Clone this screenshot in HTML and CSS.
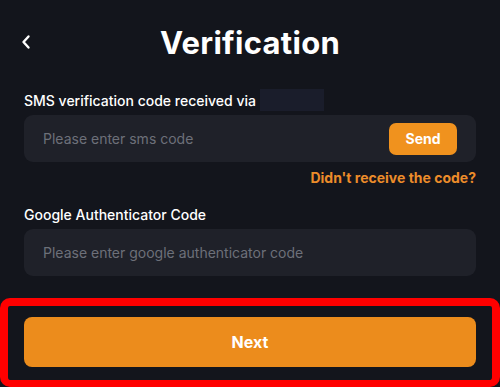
FILE: index.html
```html
<!DOCTYPE html>
<html>
<head>
<meta charset="utf-8">
<link rel="stylesheet" href="styles.css">
</head>
<body>
<div class="page">
  <header class="top">
    <button class="back" aria-label="Back">
      <svg width="12" height="16" viewBox="0 0 12 16"><path d="M8.5 2.5 L3.5 8 L8.5 13.5" fill="none" stroke="#fff" stroke-width="2.4" stroke-linecap="round" stroke-linejoin="round"/></svg>
    </button>
    <h1 class="title">Verification</h1>
  </header>
  <section class="form">
    <div class="label-row">
      <span class="label">SMS verification code received via</span>
      <span class="redact"></span>
    </div>
    <div class="field">
      <span class="placeholder">Please enter sms code</span>
      <button class="send">Send</button>
    </div>
    <div class="resend">Didn't receive the code?</div>
    <div class="label-row second">
      <span class="label">Google Authenticator Code</span>
    </div>
    <div class="field">
      <span class="placeholder">Please enter google authenticator code</span>
    </div>
  </section>
  <div class="footer">
    <button class="next">Next</button>
  </div>
</div>
</body>
</html>
```
FILE: styles.css
```css
* { box-sizing: border-box; }
html, body {
  margin: 0;
  padding: 0;
  background: #13151c;
  font-family: Inter, "Noto Sans", sans-serif;
  color: #fff;
}
.page {
  width: 500px;
  height: 387px;
  display: flex;
  flex-direction: column;
  overflow: hidden;
}
.top {
  height: 85px;
  display: flex;
  align-items: center;
  justify-content: center;
  position: relative;
}
.back {
  position: absolute;
  left: 20px;
  top: 34px;
  background: none;
  border: 0;
  padding: 0;
  width: 16px;
  height: 16px;
  display: flex;
}
.title {
  margin: 0;
  font-size: 31px;
  font-weight: 700;
  letter-spacing: 0.3px;
  line-height: 1;
  margin-top: 0;
}
.form {
  padding: 0 24px;
  display: flex;
  flex-direction: column;
}
.label-row {
  display: flex;
  align-items: center;
  height: 30px;
}
.label {
  font-size: 14px;
  font-weight: 500;
  color: #fff;
}
.redact {
  display: inline-block;
  width: 64px;
  height: 22px;
  background: #1a1d2b;
  margin-left: 4px;
}
.field {
  height: 47px;
  background: #1f2129;
  border-radius: 9px;
  display: flex;
  align-items: center;
  justify-content: space-between;
  padding: 0 19px;
}
.placeholder {
  font-size: 14px;
  color: #6d7079;
}
.send {
  width: 68px;
  height: 32px;
  background: #f0921e;
  border: 0;
  border-radius: 7px;
  color: #fff;
  font-family: inherit;
  font-size: 14px;
  font-weight: 700;
}
.resend {
  text-align: right;
  color: #ec8c2a;
  font-size: 14px;
  font-weight: 700;
  margin-top: 7px;
  line-height: 17px;
}
.second {
  margin-top: 13px;
}
.footer {
  margin-top: auto;
  height: 89px;
  border: 8px solid #ff0000;
  border-bottom-width: 7px;
  border-radius: 10px;
  padding: 11px 16px 0 16px;
}
.next {
  width: 100%;
  height: 50px;
  background: #ec8c1c;
  border: 0;
  border-radius: 8px;
  color: #fff;
  font-family: inherit;
  font-size: 16px;
  font-weight: 700;
}
```
